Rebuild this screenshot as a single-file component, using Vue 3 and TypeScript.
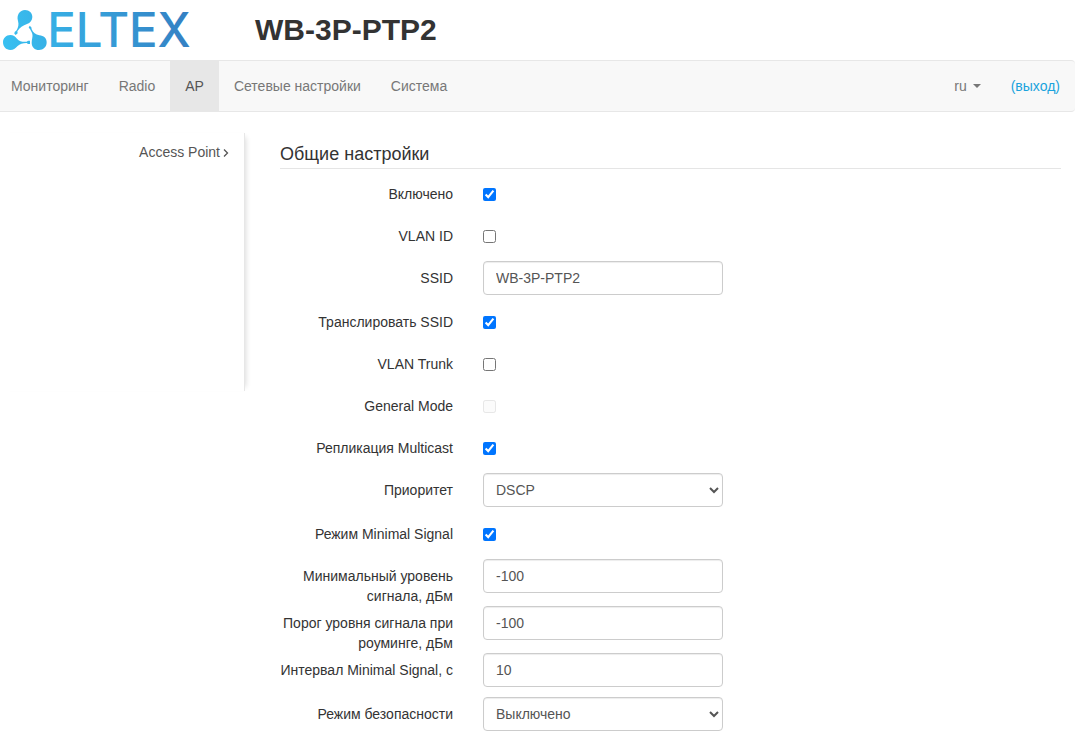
<script setup lang="ts">
import { reactive, ref } from 'vue'

interface Field {
  id: string
  label: string
  kind: 'check' | 'text' | 'select'
  value: string | boolean
  disabled?: boolean
  options?: string[]
}

const tabs = ['Мониторинг', 'Radio', 'AP', 'Сетевые настройки', 'Система']
const activeTab = ref('AP')

const fields = reactive<Field[]>([
  { id: 'enabled', label: 'Включено', kind: 'check', value: true },
  { id: 'vlan-id', label: 'VLAN ID', kind: 'check', value: false },
  { id: 'ssid', label: 'SSID', kind: 'text', value: 'WB-3P-PTP2' },
  { id: 'broadcast', label: 'Транслировать SSID', kind: 'check', value: true },
  { id: 'vlan-trunk', label: 'VLAN Trunk', kind: 'check', value: false },
  { id: 'general-mode', label: 'General Mode', kind: 'check', value: false, disabled: true },
  { id: 'multicast', label: 'Репликация Multicast', kind: 'check', value: true },
  { id: 'priority', label: 'Приоритет', kind: 'select', value: 'DSCP', options: ['DSCP', '802.1p'] },
  { id: 'minimal-signal', label: 'Режим Minimal Signal', kind: 'check', value: true },
  { id: 'signal-level', label: 'Минимальный уровень сигнала, дБм', kind: 'text', value: '-100' },
  { id: 'roaming-level', label: 'Порог уровня сигнала при роуминге, дБм', kind: 'text', value: '-100' },
  { id: 'signal-interval', label: 'Интервал Minimal Signal, с', kind: 'text', value: '10' },
  { id: 'security', label: 'Режим безопасности', kind: 'select', value: 'Выключено', options: ['Выключено', 'WPA', 'WPA2'] },
])
</script>

<template>
  <div class="page">
    <header class="header">
      <svg class="logo" viewBox="0 0 600 180" role="img" aria-label="ELTEX">
        <defs>
          <linearGradient id="brand" gradientUnits="userSpaceOnUse" x1="10" y1="130" x2="575" y2="60">
            <stop offset="0" stop-color="#38c0f1" />
            <stop offset="1" stop-color="#347fc2" />
          </linearGradient>
        </defs>
        <g fill="url(#brand)">
          <path d="M75 30C88 30 97 39 97 51C97 61 91 69 81 72C69 76 59 82 52 94L53 100L47 105L43 101L44 96L50 91C55 82 57 73 54 63C49 45 59 30 75 30Z" />
          <path d="M89 77L94 82L95 88C99 98 107 104 118 106C131 107 140 115 140 127C140 141 130 150 117 150C104 150 95 141 95 128C95 118 99 110 97 102C96 97 92 92 90 87L86 83Z" />
          <path d="M31 105C40 105 46 110 51 116C58 124 68 126 80 125L84 122H90V132H84L80 129C68 129 60 132 52 139C46 146 40 150 31 150C18 150 9 140 9 127C9 115 18 105 31 105Z" />
          <text class="wordmark" x="142" y="141">ELTEX</text>
        </g>
      </svg>
      <h1 class="title">WB-3P-PTP2</h1>
    </header>

    <nav class="navbar">
      <ul class="tabs">
        <li v-for="tab in tabs" :key="tab">
          <a href="#" :class="{ active: tab === activeTab }" @click.prevent="activeTab = tab">{{ tab }}</a>
        </li>
      </ul>
      <ul class="tabs">
        <li><button type="button" class="lang">ru<span class="caret"></span></button></li>
        <li><a href="#" class="logout">(выход)</a></li>
      </ul>
    </nav>

    <div class="body">
      <aside class="sidebar">
        <a href="#" class="side-link">Access Point<svg class="chevron" viewBox="0 0 6 8" aria-hidden="true"><path d="M1 .5L4.5 4L1 7.5" /></svg></a>
      </aside>

      <main class="main">
        <form @submit.prevent>
          <h2 class="legend">Общие настройки</h2>
          <div v-for="f in fields" :key="f.id" class="row">
            <label :for="f.id" class="label">{{ f.label }}</label>
            <div class="control">
              <input v-if="f.kind === 'check'" :id="f.id" v-model="f.value" type="checkbox" class="check" :disabled="f.disabled" />
              <input v-else-if="f.kind === 'text'" :id="f.id" v-model="f.value" type="text" class="field" />
              <select v-else :id="f.id" v-model="f.value" class="field select">
                <option v-for="o in f.options" :key="o" :value="o">{{ o }}</option>
              </select>
            </div>
          </div>
        </form>
      </main>
    </div>
  </div>
</template>

<style>
body {
  margin: 0;
  background: #fff;
}
</style>

<style scoped>
.page {
  font-family: "Liberation Sans", Arial, sans-serif;
  font-size: 14px;
  line-height: 20px;
  color: #333;
}
.page *,
.page *::before {
  box-sizing: border-box;
}
.header {
  display: flex;
  align-items: center;
  height: 60px;
  gap: 55px;
}
.logo {
  width: 200px;
  height: 60px;
  flex: none;
}
.wordmark {
  font-family: Inter, sans-serif;
  font-size: 142px;
  font-weight: 500;
}
.title {
  margin: 0;
  font-size: 30px;
  line-height: 34px;
  font-weight: 700;
}
.navbar {
  display: flex;
  justify-content: space-between;
  background: #f8f8f8;
  border: solid #e7e7e7;
  border-width: 1px 0;
  border-radius: 0 4px 4px 0;
}
.tabs {
  display: flex;
  margin: 0;
  padding: 0;
  list-style: none;
}
.tabs:first-child {
  margin-left: -4px;
}
.tabs a,
.lang {
  display: block;
  padding: 15px;
  color: #777;
  text-decoration: none;
}
.tabs a.active {
  color: #555;
  background: #e7e7e7;
}
.tabs a.logout {
  color: #1aa3dd;
}
.lang {
  display: flex;
  align-items: center;
  gap: 6px;
  border: 0;
  background: none;
  font: inherit;
}
.caret {
  border-top: 4px solid #777;
  border-left: 4px solid transparent;
  border-right: 4px solid transparent;
}
.body {
  display: flex;
  align-items: flex-start;
  padding: 21px 14px 0 0;
}
.sidebar {
  flex: none;
  width: 245px;
  min-height: 258px;
  padding: 9px 15px 0 0;
  text-align: right;
  border-right: 1px solid #e7e7e7;
  box-shadow: 5px 0 5px -4px #ddd;
}
.side-link {
  color: #555;
  text-decoration: none;
}
.chevron {
  width: 6px;
  height: 8px;
  margin-left: 3px;
  fill: none;
  stroke: #555;
  stroke-width: 1.3;
}
.main {
  flex: 1;
  min-width: 0;
  padding-left: 35px;
}
.legend {
  margin: 0 0 8px;
  padding: 9px 0 2px;
  font-size: 18px;
  line-height: 24px;
  font-weight: 400;
  border-bottom: 1px solid #e5e5e5;
}
.row {
  display: grid;
  grid-template-columns: 173px minmax(0, 240px);
  column-gap: 30px;
  align-items: start;
}
.label {
  padding-top: 7px;
  text-align: right;
}
.control {
  display: flex;
  min-height: 42px;
  padding-bottom: 10px;
}
.check {
  width: 13px;
  height: 13px;
  margin: 11px 0 0;
}
.check:disabled {
  opacity: 0.5;
}
.field {
  width: 100%;
  height: 34px;
  padding: 6px 12px;
  border: 1px solid #ccc;
  border-radius: 4px;
  background: #fff;
  box-shadow: inset 0 1px 1px rgba(0, 0, 0, 0.075);
  color: #555;
  font: inherit;
}
.select {
  padding: 6px 8px;
}
</style>
